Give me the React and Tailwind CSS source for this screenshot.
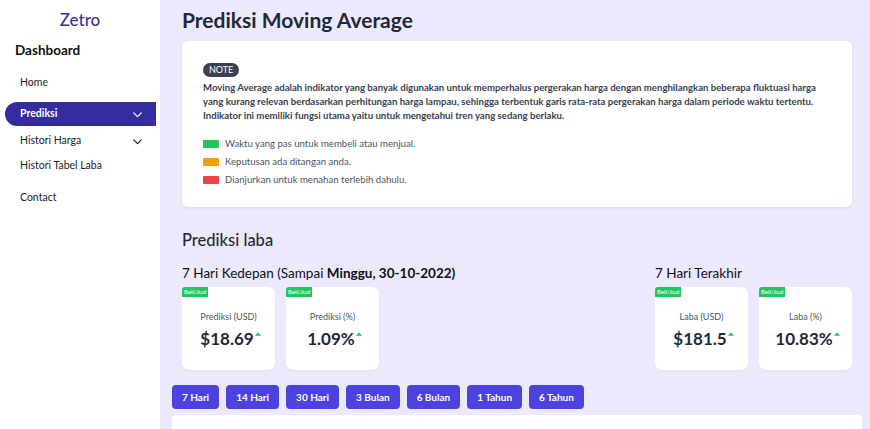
import React from "react";

const Chevron = ({ className }) => (
  <svg viewBox="0 0 24 24" className={className} fill="none" stroke="currentColor" strokeWidth="2.2" strokeLinecap="round" strokeLinejoin="round">
    <path d="M5 9l7 7 7-7" />
  </svg>
);

const Caret = () => (
  <svg viewBox="0 0 10 6" className="w-[6px] h-[4px] text-[#22c55e] ml-[1px] -mt-[10px]" fill="currentColor">
    <path d="M5 0L10 6H0z" />
  </svg>
);

function StatCard({ label, value }) {
  return (
    <div className="relative w-[93px] h-[83px] bg-white rounded-[7px] shadow-[0_1px_2px_rgba(0,0,0,0.05)] flex flex-col items-center pt-[24px]">
      <span className="absolute left-0 top-0 bg-[#22c55e] text-white text-[6px] leading-none px-[2px] py-[2px] rounded-tl-[3px]">Beli/Jual</span>
      <span className="text-[9px] text-[#4b5563] leading-[12px]">{label}</span>
      <div className="flex items-center mt-[6px] pl-[4px]">
        <span className="text-[17px] font-bold text-[#1f2937] leading-[20px]">{value}</span>
        <Caret />
      </div>
    </div>
  );
}

export default function App() {
  const buttons = ["7 Hari", "14 Hari", "30 Hari", "3 Bulan", "6 Bulan", "1 Tahun", "6 Tahun"];
  return (
    <div className="flex w-[870px] h-[429px] overflow-hidden bg-[#ece9fd]" style={{ fontFamily: 'Lato, sans-serif' }}>
      <aside className="w-[160px] shrink-0 bg-white flex flex-col">
        <div className="text-center text-[17px] text-[#3b3397] font-medium leading-[20px] mt-[10px]">Zetro</div>
        <div className="text-[13.5px] font-bold text-[#111] ml-[15px] mt-[11px] leading-[18px]">Dashboard</div>
        <nav className="mt-[15px] flex flex-col text-[10.5px] text-[#222]">
          <div className="pl-[20px] h-[18px] flex items-center">Home</div>
          <div className="mt-[10px] ml-[5px] mr-[4px] h-[24px] rounded-l-full bg-[#352ca0] text-white font-bold flex items-center justify-between pl-[15px] pr-[12px]">
            <span>Prediksi</span>
            <Chevron className="w-[13px] h-[13px]" />
          </div>
          <div className="mt-[3px] h-[24px] flex items-center justify-between pl-[20px] pr-[16px]">
            <span>Histori Harga</span>
            <Chevron className="w-[13px] h-[13px]" />
          </div>
          <div className="mt-[1px] h-[24px] flex items-center pl-[20px]">Histori Tabel Laba</div>
          <div className="mt-[8px] h-[24px] flex items-center pl-[20px]">Contact</div>
        </nav>
      </aside>
      <main className="flex-1 flex flex-col pl-[12px] pr-[8px]">
        <div className="pl-[10px]">
          <h1 className="text-[21px] font-bold text-[#1f2937] leading-[26px] mt-[7px]">Prediksi Moving Average</h1>
          <div className="mt-[8px] w-[670px] h-[166px] bg-white rounded-[6px] shadow-[0_1px_3px_rgba(0,0,0,0.08)] px-[21px] pt-[22px]">
            <span className="block w-fit bg-[#374151] text-white text-[9px] leading-[14px] px-[6px] rounded-full">NOTE</span>
            <p className="mt-[4px] text-[9.6px] font-bold text-[#374151] leading-[14px]">
              Moving Average adalah indikator yang banyak digunakan untuk memperhalus pergerakan harga dengan menghilangkan beberapa fluktuasi harga yang kurang relevan berdasarkan perhitungan harga lampau, sehingga terbentuk garis rata-rata pergerakan harga dalam periode waktu tertentu. Indikator ini memiliki fungsi utama yaitu untuk mengetahui tren yang sedang berlaku.
            </p>
            <div className="mt-[15px] flex flex-col gap-[6px] text-[9.6px] text-[#4b5563]">
              <div className="flex items-center h-[12px]"><span className="w-[16px] h-[8px] rounded-[1px] bg-[#22c55e] mr-[6px]" />Waktu yang pas untuk membeli atau menjual.</div>
              <div className="flex items-center h-[12px]"><span className="w-[16px] h-[8px] rounded-[1px] bg-[#f59e0b] mr-[6px]" />Keputusan ada ditangan anda.</div>
              <div className="flex items-center h-[12px]"><span className="w-[16px] h-[8px] rounded-[1px] bg-[#ef4444] mr-[6px]" />Dianjurkan untuk menahan terlebih dahulu.</div>
            </div>
          </div>
          <h2 className="mt-[22px] text-[16.5px] text-[#1f2937] font-medium leading-[22px]">Prediksi laba</h2>
          <div className="mt-[14px] flex justify-between w-[670px]">
            <div>
              <div className="text-[13.5px] text-[#111] leading-[16px]">7 Hari Kedepan (Sampai <b>Minggu, 30-10-2022)</b></div>
              <div className="mt-[6px] flex gap-[11px]">
                <StatCard label="Prediksi (USD)" value="$18.69" />
                <StatCard label="Prediksi (%)" value="1.09%" />
              </div>
            </div>
            <div>
              <div className="text-[13.5px] text-[#111] leading-[16px]">7 Hari Terakhir</div>
              <div className="mt-[6px] flex gap-[11px]">
                <StatCard label="Laba (USD)" value="$181.5" />
                <StatCard label="Laba (%)" value="10.83%" />
              </div>
            </div>
          </div>
        </div>
        <div className="mt-[15px] flex gap-[7px]">
          {buttons.map((b) => (
            <button key={b} className="h-[24px] px-[10px] bg-[#4c43df] text-white text-[10px] font-bold rounded-[4px]">{b}</button>
          ))}
        </div>
        <div className="mt-[6px] flex-1 bg-white rounded-t-[4px]" />
      </main>
    </div>
  );
}
